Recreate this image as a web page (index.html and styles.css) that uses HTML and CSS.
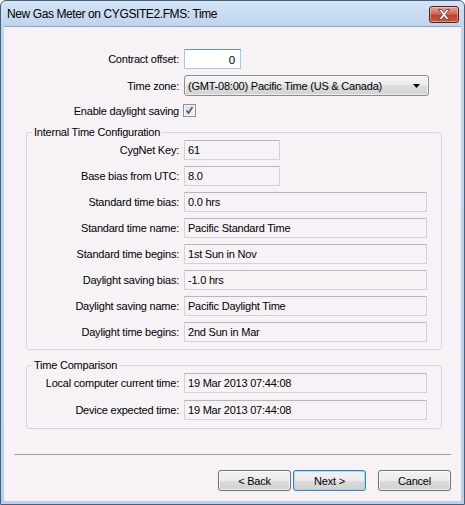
FILE: index.html
```html
<!DOCTYPE html>
<html>
<head>
<meta charset="utf-8">
<link rel="stylesheet" href="styles.css">
</head>
<body>
<div class="window">
  <div class="titlebar">
    <span class="title">New Gas Meter on CYGSITE2.FMS: Time</span>
    <div class="close">
      <svg width="14" height="11" viewBox="0 0 14 11"><path d="M1.5 0.5h3l2.5 3 2.5-3h3l-4 5 4 5h-3l-2.5-3-2.5 3h-3l4-5z" fill="#fff" stroke="#6d2a22" stroke-width="0.8" stroke-linejoin="round"/></svg>
    </div>
  </div>
  <div class="client">
    <div class="top-form">
      <span class="lbl">Contract offset:</span>
      <div class="edit offset">0</div>
      <span class="lbl">Time zone:</span>
      <div class="combo"><span>(GMT-08:00) Pacific Time (US &amp; Canada)</span><svg width="7" height="4" viewBox="0 0 7 4"><path d="M0 0h7L3.5 4z" fill="#000"/></svg></div>
      <span class="lbl chk-lbl">Enable daylight saving</span>
      <span class="check"><svg width="11" height="11" viewBox="0 0 11 11"><path d="M2.5 5.5 L4.5 8 L8.5 2" fill="none" stroke="#4a5c96" stroke-width="1.7"/></svg></span>
    </div>

    <fieldset class="group g1">
      <legend>Internal Time Configuration</legend>
      <div class="rows">
        <span class="lbl">CygNet Key:</span><div class="field short">61</div>
        <span class="lbl">Base bias from UTC:</span><div class="field short">8.0</div>
        <span class="lbl">Standard time bias:</span><div class="field">0.0 hrs</div>
        <span class="lbl">Standard time name:</span><div class="field">Pacific Standard Time</div>
        <span class="lbl">Standard time begins:</span><div class="field">1st Sun in Nov</div>
        <span class="lbl">Daylight saving bias:</span><div class="field">-1.0 hrs</div>
        <span class="lbl">Daylight saving name:</span><div class="field">Pacific Daylight Time</div>
        <span class="lbl">Daylight time begins:</span><div class="field">2nd Sun in Mar</div>
      </div>
    </fieldset>

    <fieldset class="group g2">
      <legend>Time Comparison</legend>
      <div class="rows">
        <span class="lbl">Local computer current time:</span><div class="field">19 Mar 2013 07:44:08</div>
        <span class="lbl">Device expected time:</span><div class="field">19 Mar 2013 07:44:08</div>
      </div>
    </fieldset>

    <div class="sep"></div>

    <div class="buttons">
      <div class="btn">&lt; Back</div>
      <div class="btn default">Next &gt;</div>
      <div class="btn cancel">Cancel</div>
    </div>
  </div>
</div>
</body>
</html>
```

FILE: styles.css
```css
* { box-sizing: border-box; }
html, body { margin: 0; padding: 0; }
body {
  width: 465px;
  height: 505px;
  overflow: hidden;
  background: #ffffff;
  font-family: "Liberation Sans", Arial, sans-serif;
  font-size: 11px;
  letter-spacing: -0.22px;
  color: #000;
}
.window {
  width: 465px;
  height: 505px;
  border: 1px solid #45607f;
  border-radius: 6px 6px 0 0;
  background: linear-gradient(#d4e4f5, #bfd5ed 24px, #b9d1ea);
  padding: 0 3px 3px;
  display: flex;
  flex-direction: column;
}
.titlebar {
  height: 25px;
  display: flex;
  align-items: center;
  justify-content: space-between;
  padding: 0 2px 0 3px;
}
.title {
  font-family: "Liberation Sans", Arial, sans-serif;
  font-size: 12px;
  letter-spacing: -0.4px;
  color: #000;
  margin-top: 1px;
}
.close {
  width: 30px;
  height: 17px;
  margin-top: 2px;
  border: 1px solid #5b1f19;
  border-radius: 3px;
  background: linear-gradient(#e8a394, #d46a57 45%, #c0402a 55%, #c85a45);
  box-shadow: inset 0 0 0 1px rgba(255,255,255,0.35);
  display: flex;
  align-items: center;
  justify-content: center;
}
.client {
  flex: 1;
  background: #f6f2f6;
  border: 1px solid #8fa6c2;
  border-width: 1px 0 0 0;
  display: flex;
  flex-direction: column;
}
.top-form {
  display: grid;
  grid-template-columns: 175px auto;
  column-gap: 5px;
  row-gap: 6px;
  padding-top: 22px;
  align-items: center;
}
.lbl { justify-self: end; white-space: nowrap; }
.edit.offset {
  width: 57px;
  height: 20px;
  background: #fff;
  border: 1px solid #a4c9e7;
  border-top-color: #5d95c8;
  text-align: right;
  padding: 3px 5px 0 0;
  line-height: 14px;
  font-size: 11.5px;
}
.combo {
  width: 245px;
  height: 21px;
  border: 1px solid #8c8c8c;
  border-radius: 3px;
  background: linear-gradient(#f3f3f3, #ececec 50%, #dedede 50%, #d2d2d2);
  box-shadow: inset 0 0 0 1px rgba(255,255,255,0.6);
  display: flex;
  align-items: center;
  justify-content: space-between;
  padding: 0 8px 0 3px;
}
.chk-lbl { margin-top: 2px; }
.check {
  width: 13px;
  height: 13px;
  margin-top: 2px;
  margin-left: -1px;
  border: 1px solid #8f8f8f;
  background: linear-gradient(135deg, #dcdcdc, #f6f6f6);
  box-shadow: inset 0 0 0 1px #f4f4f4;
  display: flex;
  align-items: center;
  justify-content: center;
}
.group {
  margin: 8px 0 0 22px;
  width: 416px;
  padding: 1px 0 7px 0;
  border: 1px solid #d3d7db;
  border-radius: 3px;
  min-width: 0;
}
.group legend {
  margin-left: 5px;
  padding: 0 2px;
  line-height: 14px;
  font-size: 11px;
}
.rows {
  display: grid;
  grid-template-columns: 152px auto;
  column-gap: 5px;
  row-gap: 6px;
  align-items: center;
}
.g2 { padding-bottom: 8px; }
.g2 .rows { row-gap: 7px; }
.field {
  width: 243px;
  height: 20px;
  border: 1px solid #cfd2d6;
  border-top-color: #b4b7bc;
  background: #f6f2f6;
  padding: 0 3px;
  line-height: 18px;
  white-space: nowrap;
}
.field.short { width: 96px; }
.sep {
  margin: 25px 0 0 10px;
  width: 437px;
  height: 1px;
  background: #a0a0a0;
}
.buttons {
  display: flex;
  justify-content: flex-end;
  padding-right: 10px;
  margin-top: 15px;
}
.btn {
  width: 73px;
  height: 21px;
  border: 1px solid #707070;
  border-radius: 3px;
  background: linear-gradient(#f2f2f2, #ebebeb 50%, #dddddd 50%, #cfcfcf);
  box-shadow: inset 0 0 0 1px rgba(255,255,255,0.7);
  display: flex;
  align-items: center;
  justify-content: center;
  margin-left: 2px;
}
.btn.default {
  border-color: #3c7fb1;
  box-shadow: inset 0 0 0 1px #a7dcf5;
}
.btn.cancel { margin-left: 12px; }
```
